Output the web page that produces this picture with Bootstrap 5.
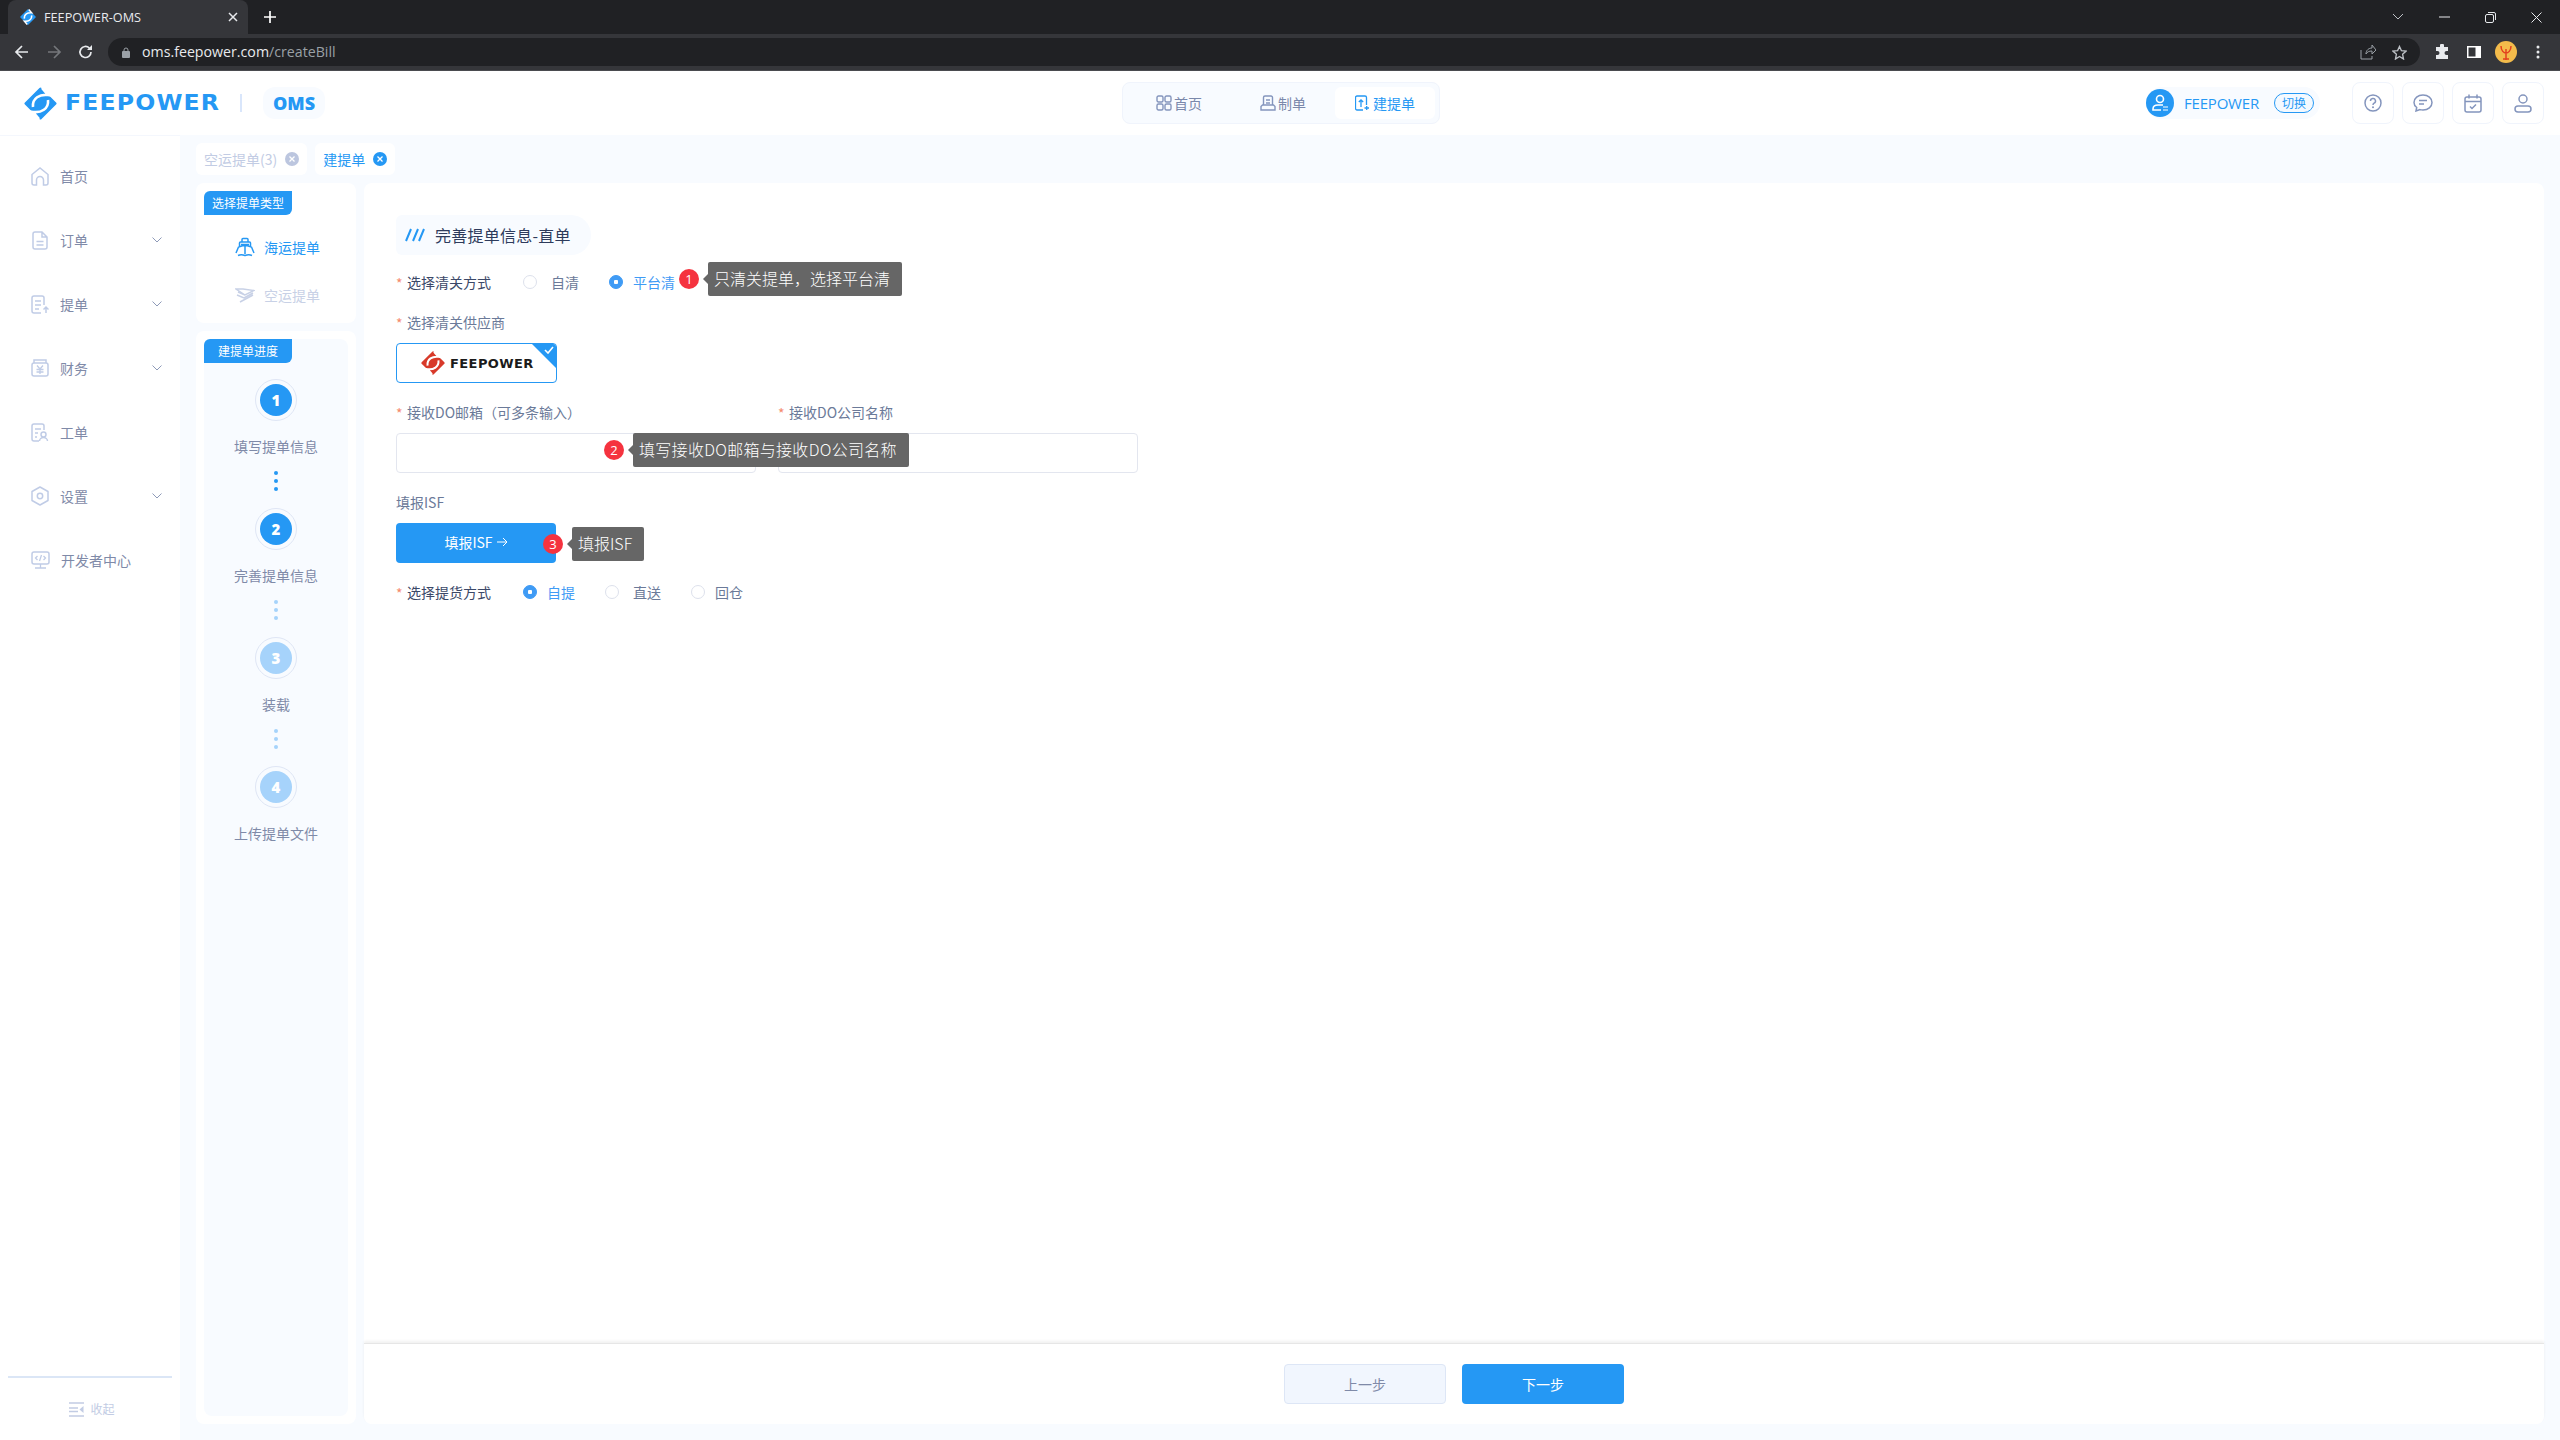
<!DOCTYPE html>
<html lang="zh"><head><meta charset="utf-8"><title>FEEPOWER-OMS</title>
<link rel="stylesheet" href="https://cdn.jsdelivr.net/npm/bootstrap@5.3.0/dist/css/bootstrap.min.css">
<style>
html,body{height:1440px;overflow:hidden}
body{font-family:"Noto Sans CJK SC","Noto Sans",sans-serif;font-size:14px;color:#6b7a99;background:#f8fbff}
svg{display:block;flex:none}
.fp-shell{height:1440px;width:2560px}
.tabstrip{height:34px;background:#202124;padding-left:8px}
.brtab{width:240px;height:34px;background:#35363a;border-radius:8px 8px 0 0;color:#e8eaed;font:12.7px "Open Sans",sans-serif;padding:0 10px 0 12px;gap:8px}
.newtab{margin-left:16px}
.winctl{margin-left:auto;gap:35px;padding-right:18px}
.toolbar{height:37px;background:#35363a;border-bottom:1px solid #4a4b4f;padding:4px 0 4px 14px}
.tool-next{margin-left:16px}
.urlbar{margin-left:14px;width:2312px;height:28px;background:#202124;border-radius:14px;padding:0 13px 0 14px;font:14.2px "Open Sans",sans-serif;color:#e8eaed}
.urlbar i{font-style:normal;color:#9aa0a6}
.urltext{margin-left:4px;padding-bottom:2px}
.tool-star{margin-left:16px}
.tool-puzzle{margin-left:14px}
.tool-side{margin-left:17px}
.tool-avatar{margin-left:14px}
.tool-menu{margin-left:19px}
.topbar{height:64px;background:#fff;padding:0 16px 0 24px}
.wordmark{font:700 20.5px "DejaVu Sans",sans-serif;letter-spacing:1px;color:#2598f4;margin-left:8px;width:152px;white-space:nowrap;transform:scaleX(1.15);transform-origin:left}
.vrule{width:2px;height:18px;background:#d9e6fb;margin:0 21px 0 23px}
.omspill{width:62px;height:32px;border-radius:12px;background:#f8fbff;color:#2598f4;font:800 18px "Open Sans",sans-serif;justify-content:center}
.navgroup{margin-left:797px;width:318px;height:42px;background:#f8fbff;border:1px solid #f0f4fc;border-radius:8px;padding:4px}
.navit{height:32px;gap:2px;justify-content:center;border-radius:6px;color:#7a88ab}
.nav-a{width:104px}.nav-b{width:104px}
.nav-c{width:100px;background:#fff;color:#2598f4;gap:4px}
.userpill{width:174px;height:32px;border-radius:16px;background:#f8fbff;color:#2598f4;margin-left:auto}
.useravatar{width:28px;height:28px;border-radius:50%;background:#2598f4;margin-right:10px;align-items:center;justify-content:center}
.uname{font:15px "Open Sans",sans-serif;width:74px;white-space:nowrap;letter-spacing:-.2px}
.switchtag{width:40px;height:20px;margin-left:16px;border:1px solid #2598f4;border-radius:10px;background:#f3f9ff;font-size:12px;line-height:18px;text-align:center}
.iconbox{width:42px;height:42px;border:1px solid #f0f4fc;border-radius:8px;background:#fff;justify-content:center;margin-left:8px}
.iconbox.first{margin-left:32px}
.fp-work{height:1305px}
.sidenav{width:180px;background:#fff;border-top:1px solid #f4f7fd;padding-top:8px}
.sideitem{height:64px;padding:0 18px 0 31px;gap:11px;color:#7f8aa8;white-space:nowrap}
.sideitem .chev{margin-left:auto}
.sidefoot{margin-top:auto;margin-left:8px;margin-right:8px;border-top:2px solid #dbe6f6;height:64px;justify-content:center;gap:6px;color:#c2cce4;font-size:12px;padding-left:4px}
.fp-area{padding:8px 16px 16px 16px;flex:1;min-width:0}
.tabsrow{gap:8px;height:32px;margin-bottom:8px}
.pagetab{height:32px;background:#fff;border-radius:6px;padding:0 8px;gap:8px;color:#c2cce4;font-size:14px}
.pagetab.on{color:#2598f4}
.tabx{width:14px;height:14px;border-radius:50%;background:#bcc6df;justify-content:center}
.on .tabx{background:#2598f4}
.colwrap{gap:8px;height:1241px}
.leftcol{width:160px;gap:8px}
.typecard{background:#fff;border-radius:8px;padding:8px;height:140px}
.progcard{background:#fff;border-radius:8px;padding:8px;flex:1}
.proginner{background:#f8fbff;border-radius:8px;height:100%}
.cornertag{width:88px;height:24px;background:#2598f4;color:#fff;font-size:12px;line-height:24px;text-align:center;border-radius:6px 0 6px 0}
.typeopt{height:48px;gap:9px;padding-left:31px;color:#2598f4;white-space:nowrap}
.typeopt.off{color:#c8d1e6}
.stepcol{padding-top:16px}
.stepit{height:129px;align-items:center}
.stepring{width:42px;height:42px;border-radius:50%;border:1px solid #dfe6f5;justify-content:center;flex:none}
.stepnum{width:32px;height:32px;border-radius:50%;background:#2598f4;color:#fff;font:800 15px "Open Sans",sans-serif;justify-content:center}
.dim .stepnum{background:#a6d3fb}
.steplabel{height:22px;line-height:22px;margin-top:14px;color:#7f8aa8}
.stepdots{gap:4px;margin-top:14px}
.stepdots b{width:4px;height:4px;border-radius:50%;background:#2598f4;display:block}
.stepdots.dimd b{background:#a6d3fb}
.mainpanel{flex:1;background:#fff;border-radius:8px;min-width:0}
.formscroll{flex:1;padding:32px 32px 0 32px;position:relative}
.titlepill{width:195px;height:40px;background:#f8fbff;border-radius:6px 20px 20px 6px;padding-left:9px;gap:10px;color:#2e3b5c;font-size:16px;letter-spacing:.25px}
.frow{height:22px;white-space:nowrap;color:#6b7a99;padding-bottom:2px}
.req{color:#f58a6e;width:11px;font-size:14px;flex:none;padding-top:3px;line-height:19px}
.darklbl{color:#3b4868}
.r1{margin-top:17px}
.fp-radio.form-check-input{width:14px;height:14px;margin:0;flex:none;border:1px solid #dde1ec;background-color:#fff}
.fp-radio.form-check-input:checked{background-color:#3f9bf5;border-color:#3f9bf5;background-image:radial-gradient(circle,#fff 0 2px,transparent 2.5px)}
.fp-radio.first-r{margin-left:32px}
.fp-radio.gapa{margin-left:30px}
.rlab{margin:0 0 0 14px}
.rlab.sel,.rlab.close-lab{margin-left:10px}
.rlab.sel{color:#3f9bf5}
.r2{margin-top:18px}
.vendor{width:161px;height:40px;border:1px solid #2598f4;border-radius:4px;margin-top:9px;background:#fff;position:relative;overflow:hidden;padding-left:24px;gap:5px}
.tick{position:absolute;right:0;top:0;width:0;height:0;border-top:24px solid #2598f4;border-left:24px solid transparent}
.tickmark{position:absolute;right:2px;top:2px}
.vendname{font:700 12.5px "DejaVu Sans",sans-serif;color:#1b1b1b;letter-spacing:.4px;width:84px;white-space:nowrap;transform:scaleX(1.04);transform-origin:left}
.r3{margin-top:19px}
.inputs{gap:22px}
.inputcol{width:360px}
.fp-input.form-control{height:40px;border:1px solid #e3e6ef;border-radius:4px;margin-top:9px;box-shadow:none}
.r4{margin-top:19px}
.isfbtn.btn{width:160px;height:40px;background:#2598f4;color:#fff;border:0;border-radius:4px;margin-top:9px;font-size:14px;padding:0 0 2px;display:flex;align-items:center;justify-content:center;gap:4px}
.r5{margin-top:19px}
.hintwrap{position:absolute;display:flex;align-items:center;gap:9px}
.redbadge{width:20px;height:20px;border-radius:50%;background:#f5333f;color:#fff;font:13px "Open Sans",sans-serif;display:flex;align-items:center;justify-content:center;flex:none}
.hint{height:34px;background:#666;color:#fff;border-radius:2px;font-size:16px;font-weight:300;line-height:32px;padding:0 12px 0 6px;position:relative;white-space:nowrap}
.hint::before{content:"";position:absolute;left:-5px;top:12px;border:5px solid transparent;border-left:0;border-right-color:#666}
.h1{left:315px;top:79px}
.h2{left:240px;top:250px}
.h2 .hint{letter-spacing:.3px}
.h3{left:179px;top:344px}
.footbar{height:81px;border-top:1px solid #e6e6e6;box-shadow:0 -2px 3px rgba(0,0,0,.06);justify-content:center;gap:16px;background:#fff;border-radius:0 0 8px 8px}
.stepbtn.btn{width:162px;height:40px;border-radius:4px;font-size:14px;padding:0}
.prevb.btn{background:#f1f6fe;border:1px solid #dde6f6;color:#7f8aa8}
.nextb.btn{background:#2598f4;border:0;color:#fff}
</style></head><body>
<div class="fp-shell d-flex flex-column">
 <div class="tabstrip d-flex align-items-center">
  <div class="brtab d-flex align-items-center">
   <svg width="16" height="18" viewBox="0 0 33 33"><path d="M16.500 2 31 16.500 16.500 31 2 16.500Z" fill="#2598f4" stroke="#2598f4" stroke-width="3" stroke-linejoin="round"/><path d="M18 1l6 7C16 7 8 11 9 20M15 32l-6-7c8 1 16-3 15-12" fill="none" stroke="#fff" stroke-width="3"/></svg>
   <span>FEEPOWER-OMS</span>
   <svg class="ms-auto" width="10" height="10" viewBox="0 0 10 10"><path d="M1 1l8 8M9 1 1 9" stroke="#e8eaed" stroke-width="1.500"/></svg>
  </div>
  <svg class="newtab" width="12" height="12" viewBox="0 0 12 12"><path d="M6 0v12M0 6h12" stroke="#fff" stroke-width="1.700"/></svg>
  <div class="winctl d-flex align-items-center">
   <svg width="12" height="8" viewBox="0 0 12 8"><path d="M1 1l5 5 5-5" fill="none" stroke="#bdc1c6" stroke-width="1"/></svg>
   <svg width="11" height="2" viewBox="0 0 11 2"><path d="M0 1h11" stroke="#e8eaed"/></svg>
   <svg width="11" height="11" viewBox="0 0 11 11"><rect x=".5" y="2.500" width="8" height="8" rx="1.500" fill="none" stroke="#e8eaed"/><path d="M3 .5h6a1.500 1.500 0 0 1 1.500 1.500v6" fill="none" stroke="#e8eaed"/></svg>
   <svg width="11" height="11" viewBox="0 0 11 11"><path d="M.5.5l10 10M10.500.5l-10 10" stroke="#e8eaed"/></svg>
  </div>
 </div>
 <div class="toolbar d-flex align-items-center">
  <svg width="16" height="16" viewBox="0 0 16 16"><path d="M14 8H2M8 2 2 8l6 6" fill="none" stroke="#e8eaed" stroke-width="1.700"/></svg>
  <svg class="tool-next" width="16" height="16" viewBox="0 0 16 16"><path d="M2 8h12M8 2l6 6-6 6" fill="none" stroke="#75777b" stroke-width="1.700"/></svg>
  <svg class="tool-next" width="16" height="16" viewBox="0 0 16 16"><path d="M13 8a5.500 5.500 0 1 1-1.600-3.900" fill="none" stroke="#e8eaed" stroke-width="1.700"/><path d="M14 1v5H9z" fill="#e8eaed"/></svg>
  <div class="urlbar d-flex align-items-center">
   <svg width="8" height="11" viewBox="0 0 8 11" class="me-2"><rect y="4" width="8" height="7" rx="1" fill="#9aa0a6"/><path d="M2 4V3a2 2 0 0 1 4 0v1" fill="none" stroke="#9aa0a6"/></svg>
   <span class="urltext">oms.feepower.com<i>/createBill</i></span>
   <svg class="ms-auto" width="16" height="16" viewBox="0 0 16 16"><path d="M1 6v9h11v-3M6 10c0-4 3-6 6-6V1l4 5-4 4V7c-3 0-5 1-6 3Z" fill="none" stroke="#9aa0a6"/></svg>
   <svg class="tool-star" width="15" height="15" viewBox="0 0 16 16"><path d="M8 1.500 10 6l5 .5-3.700 3.300L12.300 15 8 12.300 3.700 15l1-5.200L1 6.500 6 6Z" fill="none" stroke="#bdc1c6" stroke-width="1.400"/></svg>
  </div>
  <svg class="tool-puzzle" width="16" height="16" viewBox="0 0 16 16"><path d="M6 1.500a2 2 0 0 1 4 0V3h4v4h-1.500a2 2 0 0 0 0 4H14v4H2v-4h1.500a2 2 0 0 0 0-4H2V3h4Z" fill="#e8eaed"/></svg>
  <svg class="tool-side" width="14" height="12" viewBox="0 0 14 12"><path d="M0 0h14v12H0z" fill="#fff"/><path d="M1.500 1.500h7v9h-7z" fill="#35363a"/></svg>
  <svg class="tool-avatar" width="22" height="22" viewBox="0 0 22 22"><circle cx="11" cy="11" r="11" fill="#f3bb4b"/><path d="M6 5c0 5 3 7 5 7s5-2 5-7M11 8v11M8 18h6" fill="none" stroke="#e2401f" stroke-width="1.500"/></svg>
  <svg class="tool-menu" width="4" height="14" viewBox="0 0 4 14"><circle cx="2" cy="2" r="1.500" fill="#e8eaed"/><circle cx="2" cy="7" r="1.500" fill="#e8eaed"/><circle cx="2" cy="12" r="1.500" fill="#e8eaed"/></svg>
 </div>
 <div class="topbar d-flex align-items-center">
  <svg width="33" height="33" viewBox="0 0 33 33"><path d="M16.500 2 31 16.500 16.500 31 2 16.500Z" fill="#2598f4" stroke="#2598f4" stroke-width="3" stroke-linejoin="round"/><path d="M18 1l6 7C16 7 8 11 9 20M15 32l-6-7c8 1 16-3 15-12" fill="none" stroke="#fff" stroke-width="2.600"/></svg>
  <div class="wordmark">FEEPOWER</div>
  <div class="vrule"></div>
  <div class="omspill d-flex align-items-center">OMS</div>
  <div class="navgroup d-flex align-items-center">
   <div class="navit nav-a d-flex align-items-center"><svg width="16" height="16" viewBox="0 0 16 16"><g fill="none" stroke="#8495bd" stroke-width="1.400"><rect x="1" y="1" width="6" height="6" rx="1.500"/><rect x="9" y="1" width="6" height="6" rx="1.500"/><rect x="1" y="9" width="6" height="6" rx="1.500"/><rect x="9" y="9" width="6" height="6" rx="1.500"/></g></svg><span>首页</span></div>
   <div class="navit nav-b d-flex align-items-center"><svg width="16" height="16" viewBox="0 0 16 16"><g fill="none" stroke="#8495bd" stroke-width="1.400"><path d="M3.500 10V2.500a1.500 1.500 0 0 1 1.500-1.500h6a1.500 1.500 0 0 1 1.500 1.500V10"/><path d="M1 11.500 2.500 10h11l1.500 1.500V15H1Z"/><path d="M6 5h4M6 8h4"/></g></svg><span>制单</span></div>
   <div class="navit nav-c d-flex align-items-center"><svg width="14" height="16" viewBox="0 0 14 16"><g fill="none" stroke="#2598f4" stroke-width="1.300"><path d="M8 15H2a1.500 1.500 0 0 1-1.500-1.500v-11A1.500 1.500 0 0 1 2 1h8a1.500 1.500 0 0 1 1.500 1.500V10"/><path d="M6 12V5M3.800 7 6 5l2.200 2M9.500 13h4.500M11.700 11v4"/></g></svg><span>建提单</span></div>
  </div>
  <div class="userpill d-flex align-items-center">
   <div class="useravatar d-flex"><svg width="20" height="20" viewBox="0 0 20 20"><circle cx="10" cy="6" r="3.500" fill="none" stroke="#fff" stroke-width="1.600"/><path d="M13 12H8c-3 0-5 1-5 4v1h8" fill="none" stroke="#fff" stroke-width="1.600"/><path d="M13 14h5M13 17h5" stroke="#fff"/></svg></div>
   <div class="uname">FEEPOWER</div>
   <div class="switchtag">切换</div>
  </div>
  <div class="iconbox first d-flex align-items-center"><svg width="18" height="18" viewBox="0 0 18 18"><circle cx="9" cy="9" r="8" fill="none" stroke="#8495bd" stroke-width="1.500"/><path d="M6.500 7a2.500 2.500 0 1 1 3.600 2.200C9.300 9.700 9 10 9 11" fill="none" stroke="#8495bd" stroke-width="1.500"/><circle cx="9" cy="13.300" r="1" fill="#8495bd"/></svg></div>
  <div class="iconbox d-flex align-items-center"><svg width="20" height="18" viewBox="0 0 20 18"><path d="M10 1c5 0 9 3 9 7.500S15 16 10 16c-1 0-2-.1-3-.4L3 17l.7-3.500C2 12.200 1 10.500 1 8.500 1 4 5 1 10 1Z" fill="none" stroke="#8495bd" stroke-width="1.500"/><path d="M6 6.500h8M6 10h5" stroke="#8495bd" stroke-width="1.500"/></svg></div>
  <div class="iconbox d-flex align-items-center"><svg width="18" height="19" viewBox="0 0 18 19"><rect x="1" y="3" width="16" height="15" rx="2" fill="none" stroke="#8495bd" stroke-width="1.500"/><path d="M1 7.500h16M5 .5v4M13 .5v4M6 12.500l2 2 4-4" fill="none" stroke="#8495bd" stroke-width="1.500"/></svg></div>
  <div class="iconbox d-flex align-items-center"><svg width="18" height="19" viewBox="0 0 18 19"><circle cx="9" cy="5" r="4" fill="none" stroke="#8495bd" stroke-width="1.500"/><rect x="1" y="12" width="16" height="6" rx="3" fill="none" stroke="#8495bd" stroke-width="1.500"/></svg></div>
 </div>
 <div class="fp-work d-flex">
  <nav class="sidenav d-flex flex-column">
   <div class="sideitem d-flex align-items-center"><svg width="18" height="19" viewBox="0 0 18 19"><path d="M1 7.500 9 1l8 6.500V16a2 2 0 0 1-2 2h-2.500v-5a3.500 3.500 0 0 0-7 0v5H3a2 2 0 0 1-2-2Z" fill="none" stroke="#c0cce6" stroke-width="1.500"/></svg><span>首页</span></div>
   <div class="sideitem d-flex align-items-center"><svg width="18" height="19" viewBox="0 0 16 19"><path d="M1 3a2 2 0 0 1 2-2h7l5 5v10a2 2 0 0 1-2 2H3a2 2 0 0 1-2-2ZM10 1v5h5M4.500 10.500h7M4.500 14h7" fill="none" stroke="#c0cce6" stroke-width="1.500"/></svg><span>订单</span><svg class="chev" width="10" height="6" viewBox="0 0 10 6"><path d="M.5.500 5 5 9.500.500" fill="none" stroke="#8e9ab8"/></svg></div>
   <div class="sideitem d-flex align-items-center"><svg width="18" height="19" viewBox="0 0 18 19"><path d="M10 18H3a2 2 0 0 1-2-2V3a2 2 0 0 1 2-2h8a2 2 0 0 1 2 2v7M4 6h6M4 10h6M4 14h4M15 18v-6M12.500 14.500 15 12l2.500 2.500" fill="none" stroke="#c0cce6" stroke-width="1.500"/></svg><span>提单</span><svg class="chev" width="10" height="6" viewBox="0 0 10 6"><path d="M.5.500 5 5 9.500.500" fill="none" stroke="#8e9ab8"/></svg></div>
   <div class="sideitem d-flex align-items-center"><svg width="18" height="18" viewBox="0 0 18 18"><path d="M3 4V1h12v3" fill="none" stroke="#c0cce6" stroke-width="1.500"/><rect x="1" y="4" width="16" height="13" rx="2" fill="none" stroke="#c0cce6" stroke-width="1.500"/><path d="M6 6.500 9 10l3-3.500M5.500 10.500h7M5.500 13h7M9 10v5" fill="none" stroke="#c0cce6" stroke-width="1.300"/></svg><span>财务</span><svg class="chev" width="10" height="6" viewBox="0 0 10 6"><path d="M.5.500 5 5 9.500.500" fill="none" stroke="#8e9ab8"/></svg></div>
   <div class="sideitem d-flex align-items-center"><svg width="18" height="19" viewBox="0 0 18 19"><path d="M8 18H3a2 2 0 0 1-2-2V3a2 2 0 0 1 2-2h8a2 2 0 0 1 2 2v4M4 6h6M4 10h3M4 14h2" fill="none" stroke="#c0cce6" stroke-width="1.500"/><circle cx="12.500" cy="11.500" r="2.500" fill="none" stroke="#c0cce6" stroke-width="1.500"/><path d="M8.500 18c0-2 2-3.500 4-3.500s4 1.500 4 3.500" fill="none" stroke="#c0cce6" stroke-width="1.500"/></svg><span>工单</span></div>
   <div class="sideitem d-flex align-items-center"><svg width="18" height="20" viewBox="0 0 18 20"><path d="M9 1l8 4.500v9L9 19l-8-4.500v-9Z" fill="none" stroke="#c0cce6" stroke-width="1.500" stroke-linejoin="round"/><circle cx="9" cy="10" r="2.700" fill="none" stroke="#c0cce6" stroke-width="1.500"/></svg><span>设置</span><svg class="chev" width="10" height="6" viewBox="0 0 10 6"><path d="M.5.500 5 5 9.500.500" fill="none" stroke="#8e9ab8"/></svg></div>
   <div class="sideitem d-flex align-items-center"><svg width="19" height="18" viewBox="0 0 19 18"><rect x="1" y="1" width="17" height="12" rx="2" fill="none" stroke="#c0cce6" stroke-width="1.500"/><path d="M6.500 5 4.500 7l2 2M12.500 5l2 2-2 2M10.500 4l-2 6M9.500 13v4M4 17h11" fill="none" stroke="#c0cce6" stroke-width="1.300"/></svg><span>开发者中心</span></div>
   <div class="sidefoot d-flex align-items-center"><svg width="15" height="15" viewBox="0 0 15 15"><path d="M0 1h15M0 14h15M0 6h9M0 9.500h9" stroke="#c2cce4" stroke-width="1.500"/><path d="M14.500 4v7L10.500 7.500Z" fill="#c2cce4"/></svg><span>收起</span></div>
  </nav>
  <div class="fp-area d-flex flex-column">
   <div class="tabsrow d-flex">
    <div class="pagetab d-flex align-items-center"><span>空运提单(3)</span><div class="tabx d-flex align-items-center"><svg width="8" height="8" viewBox="0 0 8 8"><path d="M1.500 1.500l5 5M6.500 1.500l-5 5" stroke="#fff" stroke-width="1.300"/></svg></div></div>
    <div class="pagetab on d-flex align-items-center"><span>建提单</span><div class="tabx d-flex align-items-center"><svg width="8" height="8" viewBox="0 0 8 8"><path d="M1.500 1.500l5 5M6.500 1.500l-5 5" stroke="#fff" stroke-width="1.300"/></svg></div></div>
   </div>
   <div class="colwrap d-flex">
    <div class="leftcol d-flex flex-column">
     <div class="typecard">
      <div class="cornertag">选择提单类型</div>
      <div class="typeopt d-flex align-items-center mt-2"><svg width="20" height="20" viewBox="0 0 20 20"><path d="M7 5V2.500a1 1 0 0 1 1-1h4a1 1 0 0 1 1 1V5M4.500 10V6a1 1 0 0 1 1-1h9a1 1 0 0 1 1 1v4M1 16l2.500-6L10 8l6.500 2L19 16M10 8v9M3 18.500c2.500-1.300 4-1.300 7 0 3-1.300 4.500-1.300 7 0M6 7.500h8" fill="none" stroke="#2598f4" stroke-width="1.500"/></svg><span>海运提单</span></div>
      <div class="typeopt off d-flex align-items-center"><svg width="20" height="16" viewBox="0 0 20 16"><path d="M1 2h7l11 1.500-9 4.500zM2 8l7 3 9-5M5 15l13-7M3 5l7 3" fill="none" stroke="#c8d1e6" stroke-width="1.500"/></svg><span>空运提单</span></div>
     </div>
     <div class="progcard">
      <div class="proginner">
       <div class="cornertag">建提单进度</div>
       <div class="stepcol d-flex flex-column">
        <div class="stepit d-flex flex-column"><div class="stepring d-flex align-items-center"><div class="stepnum d-flex align-items-center">1</div></div><div class="steplabel">填写提单信息</div><div class="stepdots d-flex flex-column"><b></b><b></b><b></b></div></div>
        <div class="stepit d-flex flex-column"><div class="stepring d-flex align-items-center"><div class="stepnum d-flex align-items-center">2</div></div><div class="steplabel">完善提单信息</div><div class="stepdots dimd d-flex flex-column"><b></b><b></b><b></b></div></div>
        <div class="stepit dim d-flex flex-column"><div class="stepring d-flex align-items-center"><div class="stepnum d-flex align-items-center">3</div></div><div class="steplabel">装载</div><div class="stepdots dimd d-flex flex-column"><b></b><b></b><b></b></div></div>
        <div class="stepit dim d-flex flex-column"><div class="stepring d-flex align-items-center"><div class="stepnum d-flex align-items-center">4</div></div><div class="steplabel">上传提单文件</div></div>
       </div>
      </div>
     </div>
    </div>
    <div class="mainpanel d-flex flex-column">
     <div class="formscroll">
      <div class="titlepill d-flex align-items-center"><svg width="20" height="14" viewBox="0 0 20 14"><path d="M6 1 1 13M13 1 8 13M19 1l-5 12" stroke="#2598f4" stroke-width="2"/></svg><span>完善提单信息-直单</span></div>
      <div class="frow r1 d-flex align-items-center"><span class="req">*</span><span class="darklbl">选择清关方式</span>
       <input class="form-check-input fp-radio first-r" type="radio" name="a"><label class="rlab">自清</label>
       <input class="form-check-input fp-radio gapa" type="radio" name="a" checked><label class="rlab sel">平台清</label></div>
      <div class="frow r2 d-flex align-items-center"><span class="req">*</span><span>选择清关供应商</span></div>
      <div class="vendor d-flex align-items-center">
       <svg width="24" height="24" viewBox="0 0 33 33"><path d="M16.500 2 31 16.500 16.500 31 2 16.500Z" fill="#d83a2a" stroke="#d83a2a" stroke-width="3" stroke-linejoin="round"/><path d="M18 1l6 7C16 7 8 11 9 20M15 32l-6-7c8 1 16-3 15-12" fill="none" stroke="#fff" stroke-width="2.800"/></svg>
       <span class="vendname">FEEPOWER</span>
       <div class="tick"></div>
       <svg class="tickmark" width="10" height="8" viewBox="0 0 10 8"><path d="M1 4l3 3 5-6" fill="none" stroke="#fff" stroke-width="1.600"/></svg>
      </div>
      <div class="inputs r3 d-flex">
       <div class="inputcol"><div class="frow d-flex align-items-center"><span class="req">*</span><span>接收DO邮箱（可多条输入）</span></div><input class="form-control fp-input" type="text"></div>
       <div class="inputcol"><div class="frow d-flex align-items-center"><span class="req">*</span><span>接收DO公司名称</span></div><input class="form-control fp-input" type="text"></div>
      </div>
      <div class="frow r4 d-flex align-items-center"><span>填报ISF</span></div>
      <button class="btn isfbtn" type="button"><span>填报ISF</span><svg width="11" height="10" viewBox="0 0 11 10"><path d="M0 5h10M6 1l4 4-4 4" fill="none" stroke="#fff"/></svg></button>
      <div class="frow r5 d-flex align-items-center"><span class="req">*</span><span class="darklbl">选择提货方式</span>
       <input class="form-check-input fp-radio first-r" type="radio" name="b" checked><label class="rlab sel">自提</label>
       <input class="form-check-input fp-radio gapa" type="radio" name="b"><label class="rlab">直送</label>
       <input class="form-check-input fp-radio gapa" type="radio" name="b"><label class="rlab close-lab">回仓</label></div>
      <div class="hintwrap h1"><span class="redbadge">1</span><span class="hint">只清关提单，选择平台清</span></div>
      <div class="hintwrap h2"><span class="redbadge">2</span><span class="hint">填写接收DO邮箱与接收DO公司名称</span></div>
      <div class="hintwrap h3"><span class="redbadge">3</span><span class="hint">填报ISF</span></div>
     </div>
     <div class="footbar d-flex align-items-center">
      <button class="btn stepbtn prevb" type="button">上一步</button>
      <button class="btn stepbtn nextb" type="button">下一步</button>
     </div>
    </div>
   </div>
  </div>
 </div>
</div>
<script src="https://cdn.jsdelivr.net/npm/bootstrap@5.3.0/dist/js/bootstrap.bundle.min.js"></script>
</body></html>
